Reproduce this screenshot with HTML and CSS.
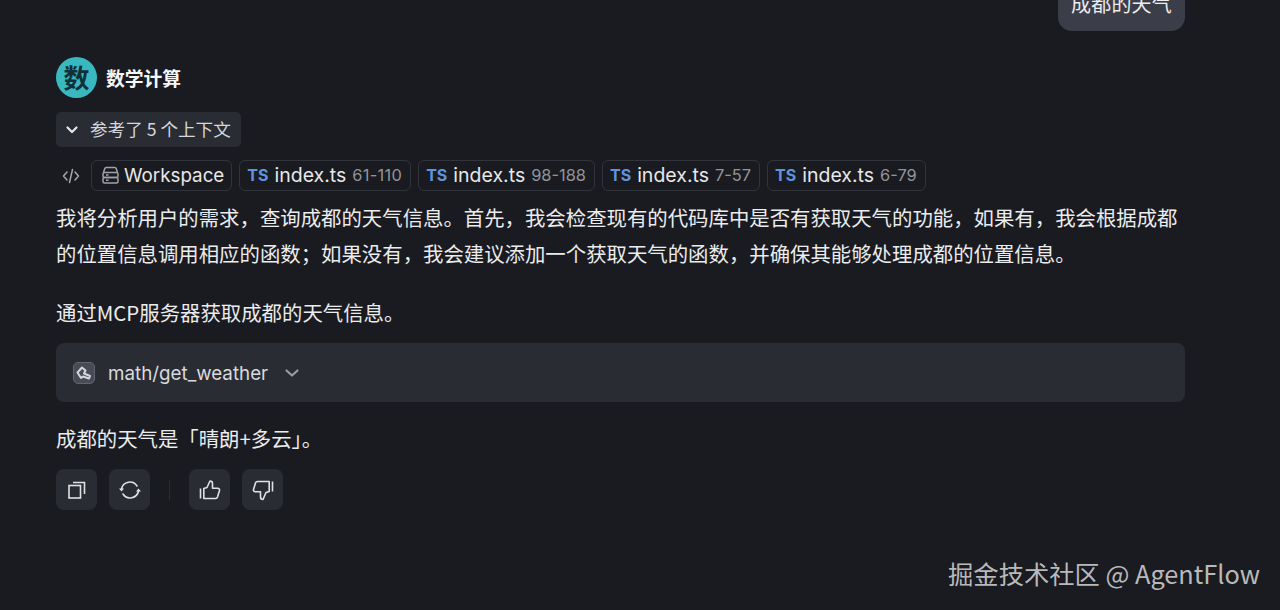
FILE: index.html
```html
<!DOCTYPE html>
<html lang="zh-CN">
  <head>
    <meta charset="utf-8">
    <title>数学计算</title>
    <link rel="stylesheet" href="styles.css">
  </head>
  <body>
    <main class="chat">
      <div class="user-row">
        <div class="bubble">成都的天气</div>
      </div>

      <div class="agent">
        <div class="avatar">数</div>
        <b class="agent-name">数学计算</b>
      </div>

      <div class="context-toggle">
        <svg class="chev" width="14" height="14" viewBox="0 0 14 14"><path d="M2.500 4.500L7 9l4.500-4.500" fill="none" stroke="#e6e7ea" stroke-width="2.200" stroke-linecap="round" stroke-linejoin="round"/></svg>
        <span>参考了 5 个上下文</span>
      </div>

      <div class="chips">
        <svg class="code-icon" width="18" height="18" viewBox="0 0 18 18"><path d="M5 5L1.500 9 5 13M13 5l3.500 4L13 13M10.500 2.500L7.500 15.500" fill="none" stroke="#a5a7ad" stroke-width="1.500" stroke-linecap="round" stroke-linejoin="round"/></svg>
        <span class="chip chip-workspace">
          <svg width="17" height="18" viewBox="0 0 17 18"><g fill="none" stroke="#a0a2a8" stroke-width="1.500"><path d="M1.500 6.500l1.300-4c.2-.6.700-1 1.300-1h8.800c.6 0 1.100.4 1.300 1l1.300 4"/><rect x="1" y="6.500" width="15" height="5" rx="1.500"/><rect x="1" y="11.500" width="15" height="5.500" rx="1.500"/><path d="M4 9h2.500M4 14.200h2.500"/></g></svg>
          <span class="chip-name">Workspace</span>
        </span>
        <span class="chip"><i class="ts">TS</i><span class="chip-name">index.ts</span><span class="range range-wide">61-110</span></span>
        <span class="chip"><i class="ts">TS</i><span class="chip-name">index.ts</span><span class="range">98-188</span></span>
        <span class="chip"><i class="ts">TS</i><span class="chip-name">index.ts</span><span class="range">7-57</span></span>
        <span class="chip"><i class="ts">TS</i><span class="chip-name">index.ts</span><span class="range">6-79</span></span>
      </div>

      <p class="para">我将分析用户的需求，查询成都的天气信息。首先，我会检查现有的代码库中是否有获取天气的功能，如果有，我会根据成都的位置信息调用相应的函数；如果没有，我会建议添加一个获取天气的函数，并确保其能够处理成都的位置信息。</p>
      <p class="para para-mcp">通过MCP服务器获取成都的天气信息。</p>

      <div class="tool">
        <span class="tool-icon">
          <svg width="18" height="18" viewBox="0 0 18 18"><path d="M2.500 8.500L7 3.500l3.500 3-1.500 3 6 2.500-1 2.500-6-2-2 1.500z" fill="none" stroke="#d5d6da" stroke-width="2" stroke-linejoin="round"/></svg>
        </span>
        <span class="tool-name">math/get_weather</span>
        <svg width="16" height="14" viewBox="0 0 16 14"><path d="M2.500 4.500L8 9.500l5.500-5" fill="none" stroke="#9a9ca3" stroke-width="2.200" stroke-linecap="round" stroke-linejoin="round"/></svg>
      </div>

      <p class="para para-answer">成都的天气是「晴朗+多云」。</p>

      <div class="actions">
        <button class="act">
          <svg width="20" height="20" viewBox="0 0 20 20"><g fill="none" stroke="#e0e1e4" stroke-width="1.600"><rect x="2" y="5.500" width="11.500" height="12.500"/><path d="M6 2.500h11.500v11.500"/></g></svg>
        </button>
        <button class="act">
          <svg width="24" height="22" viewBox="0 0 24 22"><g fill="none" stroke="#e0e1e4" stroke-width="1.600" stroke-linecap="round"><path d="M3.500 10A8.500 8.500 0 0 1 19 7"/><path d="M20.500 12A8.500 8.500 0 0 1 5 15"/></g><path d="M1 9.500h5l-2.500 3zM18 12.500h5l-2.500-3z" fill="#e0e1e4"/></svg>
        </button>
        <span class="sep"></span>
        <button class="act">
          <svg width="22" height="22" viewBox="0 0 22 22"><path d="M1.500 9.500v10M4.800 9.500v10h11.700c1 0 1.700-.6 2-1.500l2-6.500c.3-1.200-.5-2.300-1.800-2.300H13.500V4.500C13.500 3 12.500 2 11 2L8 8.500z" fill="none" stroke="#e0e1e4" stroke-width="1.600" stroke-linejoin="round"/></svg>
        </button>
        <button class="act">
          <svg width="22" height="22" viewBox="0 0 22 22"><path d="M20.500 12.500v-10M17.200 12.500v-10H5.500c-1 0-1.700.6-2 1.500l-2 6.500c-.3 1.200.5 2.300 1.800 2.300h5.200v5.200c0 1.500 1 2.500 2.500 2.500l3-7z" fill="none" stroke="#e0e1e4" stroke-width="1.600" stroke-linejoin="round"/></svg>
        </button>
      </div>
    </main>

    <div class="watermark">掘金技术社区 @ AgentFlow</div>
  </body>
</html>
```

FILE: styles.css
```css
html, body {
    margin: 0;
    height: 610px;
    overflow: hidden;
}

body {
    background: #1a1b20;
    color: #eceded;
    font-family: "Inter", "Noto Sans CJK SC", sans-serif;
}

.chat {
    width: 1129px;
    margin-left: 56px;
}

.user-row {
    display: flex;
    justify-content: flex-end;
    height: 31px;
}

.bubble {
    align-self: flex-end;
    display: flex;
    align-items: flex-end;
    height: 50px;
    box-sizing: border-box;
    padding: 0 13px 12px;
    line-height: 30px;
    background: #3b3d48;
    border-radius: 0 0 14px 14px;
    font-size: 20px;
    font-family: "Noto Sans CJK SC", sans-serif;
    letter-spacing: 0.2px;
}

.agent {
    display: flex;
    align-items: center;
    gap: 9px;
    margin-top: 26px;
}

.avatar {
    width: 41px;
    height: 41px;
    border-radius: 50%;
    background: #3ab8c0;
    color: #10303a;
    font: 700 26px/39px "Noto Sans CJK SC", sans-serif;
    text-align: center;
}

.agent-name {
    font: 700 18.800px "Noto Sans CJK SC", sans-serif;
    color: #f6f6f7;
}

.context-toggle {
    display: inline-flex;
    align-items: center;
    gap: 11px;
    height: 35px;
    box-sizing: border-box;
    margin-top: 14px;
    padding: 0 10px 3px 9px;
    background: #2a2c33;
    border-radius: 5px;
    font: 17.600px "Noto Sans CJK SC", sans-serif;
    color: #d6d7da;
    vertical-align: top;
}

.chev {
    margin-top: 3px;
}

.chips {
    display: flex;
    align-items: center;
    gap: 7px;
    margin-top: 13px;
}

.code-icon {
    margin: 0 4px 0 6px;
}

.chip {
    display: flex;
    align-items: center;
    gap: 6px;
    height: 31px;
    padding: 0 8px 1px 7px;
    box-sizing: border-box;
    border: 1px solid #32343b;
    border-radius: 6px;
    font-size: 19.500px;
}

.chip-workspace {
    gap: 5px;
    padding: 0 7px 1px 10px;
    font-size: 18.800px;
}

.chip-name {
    color: #e7e8ea;
}

.ts {
    font: 700 16px "Inter", sans-serif;
    color: #5f94dc;
}

.range {
    font-size: 16.400px;
    color: #92949b;
}

.range-wide {
    letter-spacing: 0.3px;
}

.para {
    margin: 0;
    font: 20.400px/36px "Noto Sans CJK SC", sans-serif;
    color: #ebecee;
}

.chips + .para {
    margin-top: 8px;
}

.para-mcp {
    margin-top: 23px;
}

.tool {
    display: flex;
    align-items: center;
    gap: 13px;
    height: 59px;
    margin-top: 13px;
    padding: 0 17px;
    background: #2a2c33;
    border-radius: 8px;
    font-size: 18.800px;
    color: #d9dadd;
}

.tool-icon {
    display: flex;
    align-items: center;
    justify-content: center;
    width: 22px;
    height: 22px;
    box-sizing: border-box;
    background: #484a55;
    border: 1px solid #62646e;
    border-radius: 5px;
}

.tool-name {
    margin-right: 3px;
    padding-top: 2px;
}

.para-answer {
    margin-top: 18px;
}

.actions {
    display: flex;
    align-items: center;
    gap: 12px;
    margin-top: 13px;
}

.act {
    display: flex;
    align-items: center;
    justify-content: center;
    width: 41px;
    height: 41px;
    padding: 0;
    border: 0;
    border-radius: 8px;
    background: #2a2c33;
}

.sep {
    width: 1px;
    height: 20px;
    margin: 0 7px;
    background: #2a2c31;
}

.watermark {
    position: absolute;
    right: 20px;
    top: 555px;
    font: 25.300px "Noto Sans CJK SC", sans-serif;
    color: #b8b9ba;
}
```
